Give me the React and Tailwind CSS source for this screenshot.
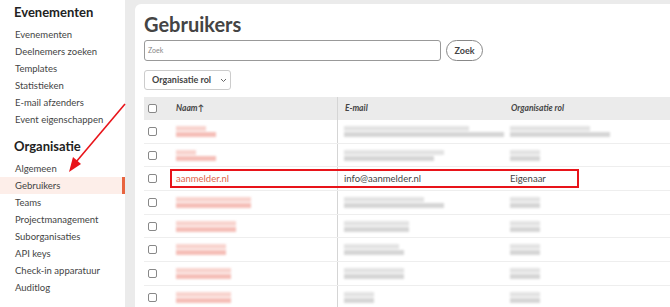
import React from "react";

const font = { fontFamily: 'Lato, "Noto Sans", sans-serif' };

function Blur({ w1, w2, color }) {
  return (
    <div className="flex flex-col gap-[1px] blur-[1.3px]">
      <div className={`h-[5px] ${color}`} style={{ width: w1, opacity: 0.5 }} />
      <div className={`h-[5px] ${color}`} style={{ width: w2, opacity: 0.75 }} />
    </div>
  );
}

const rows = [
  { n: [30, 40], e: [125, 160], r: [80, 100] },
  { n: [20, 40], e: [100, 90], r: [30, 30] },
  null,
  { n: [75, 75], e: [80, 100], r: [30, 30] },
  { n: [60, 60], e: [65, 65], r: [30, 30] },
  { n: [50, 50], e: [55, 60], r: [30, 30] },
  { n: [55, 55], e: [60, 60], r: [30, 30] },
  { n: [55, 55], e: [30, 30], r: [30, 30] },
];

function Checkbox() {
  return <div className="w-[9px] h-[9px] border border-[#888] rounded-[2px] bg-white" />;
}

export default function App() {
  const ev = ["Evenementen", "Deelnemers zoeken", "Templates", "Statistieken", "E-mail afzenders", "Event eigenschappen"];
  const org = ["Algemeen", "Gebruikers", "Teams", "Projectmanagement", "Suborganisaties", "API keys", "Check-in apparatuur", "Auditlog"];
  return (
    <div className="relative w-[670px] h-[307px] overflow-hidden bg-[#ebebeb] flex text-[#333]" style={font}>
      <aside className="w-[125px] shrink-0 bg-white pt-[3px]">
        <div className="pl-[14px] text-[13px] font-bold text-[#222] h-[18px] leading-[18px]">Evenementen</div>
        <div className="mt-[4.5px] flex flex-col">
          {ev.map((t) => (
            <div key={t} className="pl-[15px] h-[17px] leading-[17px] text-[9.5px] text-[#444] whitespace-nowrap">{t}</div>
          ))}
        </div>
        <div className="pl-[14px] mt-[9.5px] text-[13px] font-bold text-[#222] h-[18px] leading-[18px]">Organisatie</div>
        <div className="mt-[4.5px] flex flex-col">
          {org.map((t) => (
            <div
              key={t}
              className={`pl-[15px] h-[17px] leading-[17px] text-[9.5px] text-[#444] whitespace-nowrap ${t === "Gebruikers" ? "bg-[#fdeee9] border-r-[3px] border-[#e8643f]" : ""}`}
            >
              {t}
            </div>
          ))}
        </div>
      </aside>
      <main className="ml-[10px] mt-[4px] flex-1 bg-white rounded-tl-[6px] pl-[9px] pt-[7px]">
        <h1 className="text-[20px] font-bold text-[#444] leading-[26px]">Gebruikers</h1>
        <div className="mt-[3px] flex items-center gap-[5px]">
          <div className="w-[297px] h-[21px] border border-[#999] rounded-[3px] flex items-center px-[3px] text-[7px] text-[#888]">Zoek</div>
          <div className="w-[37px] h-[21px] border border-[#888] rounded-full flex items-center justify-center text-[9px] font-bold text-[#444]">Zoek</div>
        </div>
        <div className="mt-[9px] w-[87px] h-[20px] border border-[#ccc] rounded-[3px] flex items-center pl-[7px] gap-[9px] text-[9px] font-bold text-[#444] whitespace-nowrap">
          Organisatie rol
          <svg width="7" height="5" viewBox="0 0 7 5"><path d="M1 1l2.5 2.5L6 1" stroke="#666" strokeWidth="1" fill="none" /></svg>
        </div>
        <div className="mt-[7px] w-[530px]">
          <div className="flex h-[23px] bg-[#ebebeb] items-center text-[8.5px] font-bold text-[#444]">
            <div className="w-[32px] pl-[4px]"><Checkbox /></div>
            <div className="w-[161px] italic">Naam↑</div>
            <div className="w-[167px] h-full flex items-center pl-[7px] border-l border-[#d5d5d5] italic">E-mail</div>
            <div className="flex-1 pl-[7px] italic">Organisatie rol</div>
          </div>
          {rows.map((r, i) => (
            <div key={i} className="flex h-[23.7px] items-center border-b border-[#eee]">
              <div className="w-[32px] pl-[4px]"><Checkbox /></div>
              {r ? (
                <>
                  <div className="w-[161px]"><Blur w1={r.n[0]} w2={r.n[1]} color="bg-[#f2a9a0]" /></div>
                  <div className="w-[167px] h-full flex items-center pl-[6px] border-l border-[#d5d5d5]"><Blur w1={r.e[0]} w2={r.e[1]} color="bg-[#c8c8c8]" /></div>
                  <div className="flex-1 pl-[6px]"><Blur w1={r.r[0]} w2={r.r[1]} color="bg-[#c8c8c8]" /></div>
                </>
              ) : (
                <>
                  <div className="w-[161px] text-[9.5px] text-[#e0644a]">aanmelder.nl</div>
                  <div className="w-[167px] h-full flex items-center pl-[6px] border-l border-[#d5d5d5] text-[9.5px] text-[#444]">info@aanmelder.nl</div>
                  <div className="flex-1 pl-[6px] text-[9.5px] text-[#444]">Eigenaar</div>
                </>
              )}
            </div>
          ))}
        </div>
      </main>
      <div className="absolute left-[170px] top-[169px] w-[409px] h-[19px] border-2 border-[#e8141a]" />
      <svg className="absolute left-0 top-0" width="670" height="307" viewBox="0 0 670 307">
        <line x1="125" y1="104" x2="76" y2="162" stroke="#e8141a" strokeWidth="1.6" />
        <polygon points="69,172 73,157 81,164" fill="#e8141a" />
      </svg>
    </div>
  );
}
